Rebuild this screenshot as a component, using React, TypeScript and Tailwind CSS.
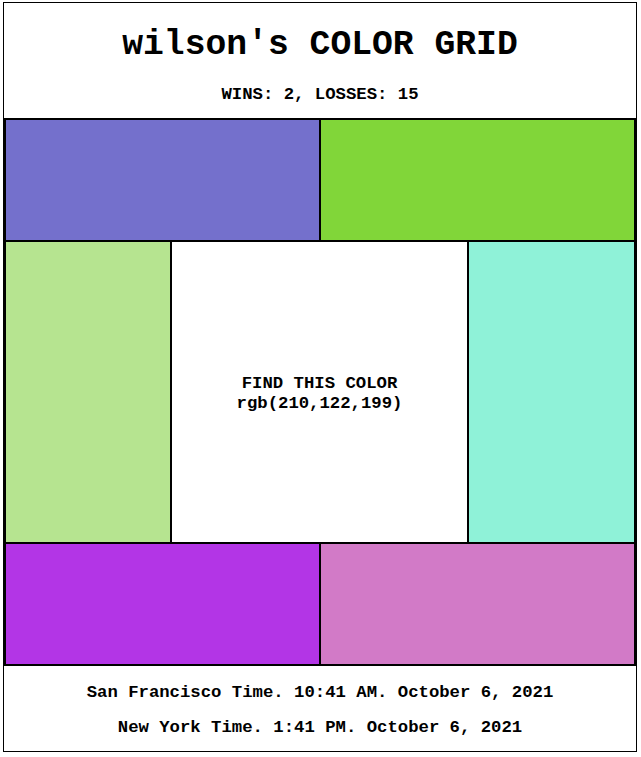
import React from 'react';

const mono = { fontFamily: '"Liberation Mono", "DejaVu Sans Mono", monospace' };

const colors = {
  topLeft: 'bg-[#7470cc]',
  topRight: 'bg-[#81d639]',
  midLeft: 'bg-[#b6e490]',
  midRight: 'bg-[#8ff2d8]',
  bottomLeft: 'bg-[#b335e6]',
  bottomRight: 'bg-[#d27ac7]',
};

export default function App() {
  return (
    <div
      className="ml-[3px] mt-[2px] w-[634px] border border-black bg-white text-black font-['Liberation_Mono',monospace]"
      style={mono}
    >
      {/* header */}
      <div className="flex flex-col items-center pt-[22px] pb-[13px] gap-[20px]">
        <h1 className="text-[34.7px] leading-[40px] font-bold">wilson's COLOR GRID</h1>
        <p className="text-[17.3px] leading-5 font-bold">WINS: 2, LOSSES: 15</p>
      </div>

      {/* color grid */}
      <div className="bg-black p-[2px] flex flex-col gap-[2px]">
        <div className="grid grid-cols-2 gap-[2px] h-[120px]">
          <button className={colors.topLeft} />
          <button className={colors.topRight} />
        </div>
        <div className="grid grid-cols-[164px_1fr_165px] gap-[2px] h-[300px]">
          <button className={colors.midLeft} />
          <div className="bg-white flex flex-col items-center justify-center pt-[4px] text-[17.3px] leading-5 font-bold">
            <span>FIND THIS COLOR</span>
            <span>rgb(210,122,199)</span>
          </div>
          <button className={colors.midRight} />
        </div>
        <div className="grid grid-cols-2 gap-[2px] h-[120px]">
          <button className={colors.bottomLeft} />
          <button className={colors.bottomRight} />
        </div>
      </div>

      {/* clocks */}
      <div className="flex flex-col items-center pt-[17px] pb-[13px] gap-[15px] text-[17.3px] leading-5 font-bold">
        <p>San Francisco Time. 10:41 AM. October 6, 2021</p>
        <p>New York Time. 1:41 PM. October 6, 2021</p>
      </div>
    </div>
  );
}
